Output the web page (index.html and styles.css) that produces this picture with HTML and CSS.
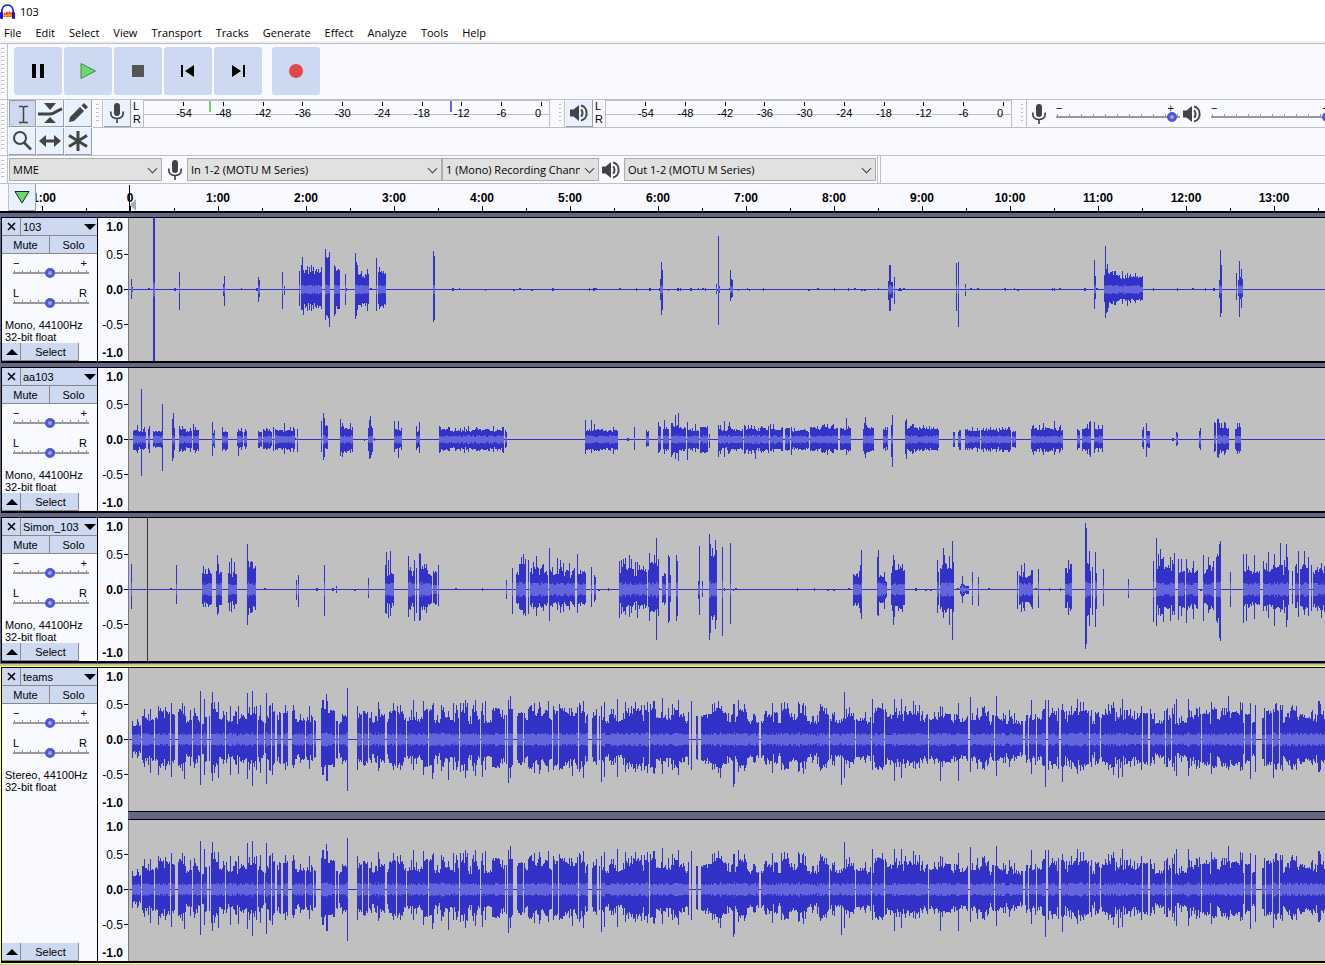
FILE: index.html
```
<!DOCTYPE html>
<html lang="en">
<head>
  <meta charset="UTF-8">
  <meta name="viewport" content="width=device-width, initial-scale=1.0">
  <title>103</title>
  <link rel="stylesheet" href="styles.css">
</head>
<body>
  <!-- Shared icons -->
  <svg class="sprite" width="0" height="0">
    <symbol id="mic" viewBox="0 0 16 20">
      <rect x="5" y="0" width="6" height="13" rx="3" fill="#444"/>
      <path d="M1.8 8.500v1.500c0 3.500 2.700 5.500 6.200 5.500s6.200-2 6.200-5.500V8.500M8 15.500V20" fill="none" stroke="#444" stroke-width="1.700"/>
    </symbol>
    <symbol id="speaker" viewBox="0 0 20 18">
      <path d="M1 5.500h3.500L10 1v16l-5.500-4.500H1z" fill="#444"/>
      <path d="M12 5.500c2 1.500 2 5.500 0 7M12 1.500c7.500 1.300 7.500 13.700 0 15" fill="none" stroke="#444" stroke-width="2"/>
    </symbol>
  </svg>

  <header class="titlebar">
    <svg width="16" height="16" viewBox="0 0 16 16">
      <path d="M2 9C1 4 4 1 7.500 1S14 4 13 9" fill="none" stroke="#1818d8" stroke-width="1.600"/>
      <path d="M3 13l1-5 1.500 1.500L7 7l1 2 1.500-2L11 9l1-1v5z" fill="#f33"/>
      <path d="M3 11l2-1 2 1 2-1.500 3 1.500v1.500H3z" fill="#fa0"/>
      <rect x="0" y="8" width="3" height="7" rx="1" fill="#1818d8"/>
      <rect x="12" y="8" width="3" height="7" rx="1" fill="#1818d8"/>
    </svg>
    <span>103</span>
  </header>

  <nav class="menubar">
    <a href="#">File</a>
    <a href="#">Edit</a>
    <a href="#">Select</a>
    <a href="#">View</a>
    <a href="#">Transport</a>
    <a href="#">Tracks</a>
    <a href="#">Generate</a>
    <a href="#">Effect</a>
    <a href="#">Analyze</a>
    <a href="#">Tools</a>
    <a href="#">Help</a>
  </nav>

  <div class="toolbar transport">
    <div class="grip"></div>
    <div class="transport-buttons">
      <button aria-label="Pause"><svg width="16" height="16"><path d="M2 1h4v14H2zM10 1h4v14h-4z"/></svg></button>
      <button aria-label="Play"><svg width="18" height="18"><path d="M2 1.500L16.500 9 2 16.500z" fill="#6fd66f" stroke="#3f8f46"/></svg></button>
      <button aria-label="Stop"><svg width="16" height="16"><path d="M2 2h12v12H2z" fill="#555"/></svg></button>
      <button aria-label="Skip to start"><svg width="16" height="16"><path d="M1 2h2v12H1zM14 2v12L5 8z"/></svg></button>
      <button aria-label="Skip to end"><svg width="16" height="16"><path d="M13 2h2v12h-2zM2 2v12l9-6z"/></svg></button>
      <button class="record" aria-label="Record"><svg width="16" height="16"><circle cx="8" cy="8" r="7" fill="#e34848"/></svg></button>
    </div>
  </div>

  <div class="toolbar tool-row">
    <div class="grip"></div>
    <div class="tools">
      <button class="active" aria-label="Selection tool"><svg width="22" height="22"><path d="M7 3.500h3.500l1 1 1-1H16M7 19.500h3.500l1-1 1 1H16M11.500 4v15" fill="none" stroke="#444" stroke-width="1.500"/></svg></button>
      <button aria-label="Envelope tool"><svg width="26" height="24"><path d="M7 2h12l-6 7zM7 22h12l-6-6z" fill="#444"/><path d="M1 13h12c5 0 7-4 12-5" fill="none" stroke="#444" stroke-width="3"/></svg></button>
      <button aria-label="Draw tool"><svg width="22" height="22"><path d="M2 20l1-5L13 5l4 4L7 19zM14.500 3.500L17 1l4 4-2.500 2.500z" fill="#444"/></svg></button>
      <button aria-label="Zoom tool"><svg width="22" height="22"><circle cx="9" cy="8" r="6" fill="none" stroke="#444" stroke-width="2"/><path d="M13 12.500l7 7" stroke="#444" stroke-width="2.500"/></svg></button>
      <button aria-label="Time shift tool"><svg width="22" height="22"><path d="M0 11l7-6v4.500h8V5l7 6-7 6v-4.500H7V17z" fill="#444"/></svg></button>
      <button aria-label="Multi tool"><svg width="22" height="22"><path d="M11 1v20M2 5.500l18 11M20 5.500L2 16.500" stroke="#444" stroke-width="3"/></svg></button>
    </div>
    <div class="meters">
      <div class="grip boxed"></div>
      <button class="meter-button" aria-label="Record meter"><svg width="16" height="20"><use href="#mic"/></svg></button>
      <div class="channels"><span>L</span><span>R</span></div>
      <div class="meter">
        <div class="scale"></div>
        <i class="peak green"></i>
        <i class="peak blue"></i>
      </div>
      <div class="grip boxed second"></div>
      <button class="meter-button" aria-label="Playback meter"><svg width="20" height="18"><use href="#speaker"/></svg></button>
      <div class="channels"><span>L</span><span>R</span></div>
      <div class="meter">
        <div class="scale"></div>
      </div>
      <div class="grip boxed second"></div>
      <div class="mixer">
        <svg width="16" height="20"><use href="#mic"/></svg>
        <div class="volume">
          <div class="ends"><span>−</span><span>+</span></div>
          <input type="range" aria-label="Recording volume" value="97">
        </div>
        <svg width="20" height="18"><use href="#speaker"/></svg>
        <div class="volume">
          <div class="ends"><span>−</span><span>+</span></div>
          <input type="range" aria-label="Playback volume" value="97">
        </div>
      </div>
    </div>
  </div>

  <div class="toolbar devices">
    <div class="grip"></div>
    <div class="device-list">
      <div class="select host"><select aria-label="Audio host"><option>MME</option></select></div>
      <svg width="16" height="20"><use href="#mic"/></svg>
      <div class="select input"><select aria-label="Recording device"><option>In 1-2 (MOTU M Series)</option></select></div>
      <div class="select chans"><select aria-label="Recording channels"><option>1 (Mono) Recording Channel</option></select></div>
      <svg width="20" height="18"><use href="#speaker"/></svg>
      <div class="select output"><select aria-label="Playback device"><option>Out 1-2 (MOTU M Series)</option></select></div>
    </div>
  </div>

  <div class="timeline">
    <div class="timeline-edge"></div>
    <button class="pin" aria-label="Pinned play head"><svg width="18" height="16"><path d="M2 2.500h14L9 14z" fill="#6fd66f" stroke="#222"/></svg></button>
    <div class="ruler"></div>
  </div>

  <main class="tracks"></main>

  <script src="tracks.js"></script>
</body>
</html>
```

FILE: styles.css
```
* {
  margin: 0;
  padding: 0;
  box-sizing: border-box;
}

body {
  font-family: "Open Sans", "Noto Sans", sans-serif;
  font-size: 12px;
  color: #000;
  background: #646687;
  min-height: 100vh;
  overflow: hidden;
}

button {
  border: none;
  background: #cdd9f0;
  font: inherit;
  color: inherit;
}

svg {
  display: block;
  flex: none;
}

.sprite {
  position: absolute;
}

/* Title and menu */
.titlebar {
  display: flex;
  align-items: center;
  gap: 4px;
  height: 23px;
  background: #fff;
  font-size: 11px;
}

.menubar {
  display: flex;
  gap: 14px;
  height: 20px;
  padding-left: 4px;
  background: #fff;
  border-bottom: 2px solid #f0f0f0;
  font-size: 11px;
  line-height: 20px;
}

.menubar a {
  color: #000;
  text-decoration: none;
}

/* Toolbars */
.toolbar {
  display: flex;
  background: #f8faff;
  border-top: 1px solid #c0c0c0;
}

.grip {
  flex: none;
  width: 8px;
  padding: 4px 3px 4px 1px;
  border-right: 1px solid #c0c0c0;
  background: repeating-linear-gradient(#c0c0c0 0 1px, transparent 1px 4px) content-box;
}

.transport {
  height: 56px;
}

.transport-buttons {
  display: flex;
  gap: 2px;
  padding: 3px 6px;
}

.transport-buttons button {
  display: grid;
  place-items: center;
  width: 48px;
  height: 48px;
  border-radius: 3px;
}

.transport-buttons .record {
  margin-left: 8px;
}

.tool-row {
  height: 56px;
}

.tools {
  flex: none;
  display: grid;
  grid-template-columns: repeat(3, 28px);
  grid-auto-rows: 28px;
  padding-left: 1px;
}

.tools button,
.meter-button,
.pin {
  display: grid;
  place-items: center;
  width: 27px;
  height: 27px;
  background: #eaf1ff;
  border-right: 1px solid #9a9fb0;
  border-bottom: 1px solid #9a9fb0;
}

.tools .active {
  background: #cdd9f0;
  border: 1px solid #9a9fb0;
}

.meters {
  flex: 1;
  display: flex;
  height: 28px;
  min-width: 0;
  border-bottom: 1px solid #c0c0c0;
  overflow: hidden;
}

.grip.boxed {
  width: 10px;
  padding: 4px 3px;
}

.grip.second {
  width: 16px;
  padding-left: 9px;
  border-left: 1px solid #c0c0c0;
}

.meter-button {
  flex: none;
  margin-left: 1px;
}

.channels {
  flex: none;
  display: flex;
  flex-direction: column;
  width: 12px;
  padding-left: 2px;
  font: 11px/13px "Liberation Sans", sans-serif;
}

.meter {
  position: relative;
  flex: none;
  width: 406px;
  padding-left: 20px;
  border-left: 1px solid #c0c0c0;
  border-top: 1px solid #c0c0c0;
  background: linear-gradient(#c0c0c0, #c0c0c0) 0 13px / 100% 1px no-repeat;
  overflow: hidden;
}

.scale {
  display: grid;
  grid-template-columns: repeat(10, 1fr);
  width: 397px;
}

.scale span {
  padding-top: 6px;
  background: linear-gradient(#000, #000) center 1px / 1px 4px no-repeat;
  font: 11px/13px "Liberation Sans", sans-serif;
  text-align: center;
}

.scale span:last-child {
  padding-right: 6px;
}

.peak {
  position: absolute;
  top: 0;
  width: 2px;
  height: 11px;
}

.peak.green {
  left: 65px;
  background: #6fd66f;
}

.peak.blue {
  left: 306px;
  background: #6464f0;
}

.mixer {
  display: flex;
  align-items: center;
  gap: 9px;
  padding-left: 4px;
}

.mixer .volume {
  width: 124px;
}

.mixer .volume + svg {
  margin-left: -7px;
}

.ends {
  display: flex;
  justify-content: space-between;
  height: 10px;
  font: 11px/10px "Liberation Sans", sans-serif;
}

.mixer .ends {
  height: 7px;
  padding-right: 6px;
  line-height: 7px;
}

input[type="range"] {
  display: block;
  appearance: none;
  width: 100%;
  height: 10px;
  background:
    linear-gradient(#999, #999) 0 4px / 100% 2px no-repeat,
    repeating-linear-gradient(90deg, #999 0 1px, transparent 1px 12px) 1px 2px / 100% 2px no-repeat;
}

input[type="range"]::-webkit-slider-thumb {
  appearance: none;
  width: 10px;
  height: 10px;
  border: 3px solid #4b55e8;
  border-radius: 50%;
  background: #aaa;
}

.devices {
  height: 28px;
}

.device-list {
  display: flex;
  align-items: center;
  padding: 0 1px;
  border-right: 1px solid #c0c0c0;
  box-shadow: 2px 0 #f8faff, 3px 0 #c0c0c0;
}

.device-list svg {
  margin: 0 4px 0 5px;
}

.select {
  position: relative;
}

.select select {
  appearance: none;
  display: block;
  width: 100%;
  height: 23px;
  padding: 0 18px 0 3px;
  border: 1px solid #adadad;
  border-radius: 0;
  background: #e1e1e1;
  color: #000;
  font: 11px "Open Sans", "Noto Sans", sans-serif;
  text-overflow: clip;
}

.select::after {
  content: "";
  position: absolute;
  right: 6px;
  top: 7px;
  width: 6px;
  height: 6px;
  border-right: 1px solid #444;
  border-bottom: 1px solid #444;
  transform: rotate(45deg);
  pointer-events: none;
}

.host { width: 153px; }
.input { width: 255px; }
.chans { width: 157px; }
.output { width: 252px; }

.device-list .chans + svg {
  margin: 0 3px 0 2px;
}

/* Time ruler */
.timeline {
  display: flex;
  height: 30px;
  background: #f8faff;
  border-top: 1px solid #c0c0c0;
  border-bottom: 2px solid #000;
}

.timeline-edge {
  flex: none;
  width: 9px;
  border-right: 1px solid #c0c0c0;
}

.pin {
  flex: none;
}

.ruler {
  position: relative;
  flex: 1;
  display: flex;
  min-width: 0;
  overflow: hidden;
}

.ruler span {
  flex: none;
  width: 88px;
  background:
    linear-gradient(#000, #000) 44px bottom / 1px 5px no-repeat,
    linear-gradient(#000, #000) 0 bottom / 1px 3px no-repeat;
  font: bold 12px/28px "Liberation Sans", sans-serif;
  text-align: center;
}

.ruler span:first-child {
  margin-left: -38px;
}

.playhead {
  position: absolute;
  left: 93px;
  top: 1px;
  height: 26px;
  border-left: 1px solid #000;
}

.playhead::after {
  content: "";
  position: absolute;
  bottom: 0;
  border: 6px solid transparent;
  border-left: none;
  border-right-color: #aaa;
}

/* Tracks */
.tracks {
  padding: 4px 0 2px 1px;
}

.track {
  display: flex;
  margin-bottom: 4px;
  border: 1px solid #000;
  border-right: none;
  border-bottom-width: 2px;
  background: #f8faff;
}

.track.selected {
  box-shadow: 0 0 0 1px #ffff78, 0 0 0 3px #c8c88c;
}

.panel {
  flex: none;
  display: flex;
  flex-direction: column;
  width: 96px;
  border-right: 1px solid #000;
  font: 11px/12px "Liberation Sans", sans-serif;
}

.panel-row {
  display: flex;
  height: 18px;
}

.panel button {
  height: 18px;
  border-right: 1px solid #888;
  border-bottom: 1px solid #888;
}

.panel .close,
.panel .collapse {
  display: grid;
  place-items: center;
  width: 19px;
  padding-left: 1px;
}

.panel .name {
  flex: 1;
  display: flex;
  align-items: center;
  justify-content: space-between;
  padding: 0 1px 0 2px;
  border-right: none;
}

.panel .mute {
  width: 48px;
}

.panel .solo {
  flex: 1;
  border-right: none;
}

.panel .select-track {
  width: 58px;
  padding-left: 2px;
}

.sliders {
  display: grid;
  gap: 10px;
  padding: 4px 8px 0 11px;
}

.sliders .ends {
  padding-right: 2px;
}

.sliders input {
  background:
    linear-gradient(#999, #999) 0 4px / 100% 2px no-repeat,
    repeating-linear-gradient(90deg, #999 0 1px, transparent 1px 8px) 1px 2px / 100% 2px no-repeat;
}

.info {
  flex: 1;
  padding: 11px 0 0 3px;
  white-space: nowrap;
}

.channel-list {
  flex: 1;
  min-width: 0;
}

.channel {
  display: flex;
  height: 143px;
}

.channel + .channel {
  position: relative;
  margin-top: 7px;
}

/* Divider between the two channels of a stereo track */
.channel + .channel::before {
  content: "";
  position: absolute;
  top: -7px;
  left: 30px;
  right: 0;
  height: 7px;
  border: 1px solid #000;
  border-width: 1px 0;
  background: #646687;
}

.levels {
  flex: none;
  display: grid;
  grid-template-rows: 17px 39px 31px 39px 17px;
  align-items: center;
  width: 30px;
  font: 12px/14px "Liberation Sans", sans-serif;
  text-align: right;
}

.levels span {
  padding-right: 5px;
  background: linear-gradient(#000, #000) right center / 4px 1px no-repeat;
}

.levels span:nth-child(odd) {
  font-weight: bold;
}

.levels span:first-child,
.levels span:last-child {
  background: none;
}

.wave {
  flex: 1;
  min-width: 0;
  height: 143px;
  border-left: 1px solid #777;
  background: #c0c0c0;
  shape-rendering: crispEdges;
}

.wave .outer {
  stroke: #3232c8;
}

.wave .inner {
  stroke: #6464dc;
}

.wave .split {
  stroke: #333;
}
```

FILE: tracks.js
```
// bursts: [from, to, up, down], peaks: [x, up, down], all in pixels round the centre line
const tracks = [
  {
    name: '103', format: 'Mono', rms: 4, specks: 90,
    bursts: [[171,191,20,19],[195,199,38,33],[204,209,22,22],[225,238,18,19],[248,255,20,20],[600,602,10,9],
      [758,762,11,14],[974,1012,16,14],[1108,1112,10,8]],
    peaks: [[1,10,9],[2,2,2],[23,72,72],[24,72,72],[49,17,20],[93,5,6],[94,13,16],[128,12,12],[129,9,7],[152,17,19],
      [154,3,5],[169,18,16],[171,24,20],[172,32,20],[173,19,25],[183,22,19],[195,40,30],[199,37,37],[204,24,26],
      [205,22,24],[215,15,15],[225,36,29],[226,27,26],[227,24,20],[246,31,21],[249,22,19],[303,38,32],[304,33,30],
      [530,10,10],[531,27,25],[532,19,20],[586,5,4],[588,53,35],[589,3,3],[600,19,11],[759,24,21],[760,24,21],
      [764,12,14],[826,26,21],[828,27,37],[835,5,6],[964,29,19],[965,13,9],[975,43,28],[976,20,23],[977,25,22],
      [978,16,18],[992,18,14],[997,16,16],[1089,9,8],[1090,39,27],[1091,24,23],[1106,16,10],[1109,28,27],[1111,20,18]]
  },
  {
    name: 'aa103', format: 'Mono', rms: 4, specks: 20,
    bursts: [[3,15,10,12],[18,19,9,9],[23,31,9,9],[42,44,13,11],[49,61,11,12],[63,68,11,13],[82,84,9,9],[92,97,9,12],
      [107,109,9,9],[110,112,9,9],[114,116,8,8],[128,131,9,10],[133,141,11,11],[145,164,11,12],[193,197,15,11],[210,222,14,16],[238,242,12,14],
      [264,271,11,11],[286,289,9,9],[309,373,11,12],[375,376,9,10],[455,487,11,13],[516,518,11,9],[528,530,14,13],
      [533,538,11,11],[541,555,15,15],[557,568,11,12],[570,577,13,14],[588,612,12,13],[614,638,12,13],[640,652,13,13],
      [655,659,12,12],[661,678,10,11],[680,707,13,13],[710,720,12,12],[733,743,12,13],[753,757,11,11],[775,808,13,13],
      [823,824,10,11],[828,830,8,10],[835,849,11,12],[851,880,10,11],[882,885,10,10],[901,932,12,13],[947,949,12,12],
      [952,960,12,13],[964,972,12,11],[1012,1013,11,9],[1017,1019,9,9],[1046,1047,6,6],[1069,1070,10,10],
      [1084,1085,18,14],[1087,1098,16,15],[1105,1110,13,13]],
    peaks: [[7,14,13],[11,50,36],[14,12,9],[19,13,13],[32,35,31],[42,20,21],[43,26,18],[49,13,12],[63,15,10],
      [82,17,16],[92,12,11],[108,10,16],[143,12,11],[154,16,14],[160,12,12],[167,10,12],[191,18,12],[193,26,20],
      [194,21,17],[210,20,16],[220,16,13],[239,19,19],[240,23,18],[264,18,12],[268,18,18],[286,13,10],[289,17,13],
      [309,13,13],[363,13,12],[455,19,14],[461,19,13],[464,15,11],[504,12,10],[528,17,13],[534,19,14],[541,16,17],
      [545,24,19],[548,26,21],[557,17,20],[565,15,12],[579,5,8],[588,14,17],[594,18,17],[599,17,13],[625,10,19],
      [640,15,11],[643,15,12],[661,12,15],[703,15,13],[716,21,15],[734,16,14],[735,22,18],[761,14,17],[762,24,27],
      [775,18,14],[776,20,19],[793,14,11],[842,12,10],[873,10,12],[902,13,12],[909,14,12],[913,16,15],[924,18,15],
      [930,14,11],[959,17,15],[960,18,17],[964,17,13],[968,14,12],[1016,16,17],[1087,20,17],[1088,20,18],
      [1094,17,15],[1109,16,13]]
  },
  {
    name: 'Simon_103', format: 'Mono', rms: 7, specks: 60, split: 17, rough: true,
    bursts: [[72,81,18,17],[86,91,19,19],[98,106,19,18],[117,125,22,20],[255,263,21,22],[278,284,19,19],[289,301,20,19],
      [303,306,21,18],[386,395,24,22],[400,417,20,18],[419,444,20,18],[447,455,18,16],[464,465,15,13],[489,516,23,20],
      [518,528,24,22],[532,535,22,22],[579,586,38,32],[723,731,16,18],[749,756,13,14],[761,774,20,19],[810,823,25,23],
      [830,838,5,7],[889,902,15,16],[935,941,23,20],[955,960,28,30],[1026,1044,24,21],[1048,1054,20,20],
      [1056,1067,20,20],[1073,1083,24,20],[1086,1089,42,40],[1113,1129,24,21],[1133,1142,24,20],[1143,1158,23,20],
      [1165,1168,28,24],[1170,1177,22,19],[1183,1196,20,20]],
    peaks: [[1,25,19],[46,24,14],[73,23,17],[87,34,25],[88,25,23],[99,27,21],[101,31,22],[104,27,19],[117,45,35],
      [118,28,25],[121,28,23],[166,9,10],[168,14,17],[194,24,26],[206,3,3],[238,11,8],[256,37,24],[258,29,28],
      [260,38,26],[278,33,27],[284,29,31],[286,21,23],[289,36,31],[290,35,30],[308,24,16],[376,9,9],[382,21,24],
      [391,32,20],[393,35,25],[398,29,24],[403,27,19],[406,33,26],[412,24,17],[419,41,31],[427,31,20],[430,29,23],
      [433,26,22],[447,35,23],[461,22,17],[489,28,28],[499,34,27],[501,30,23],[505,27,20],[507,27,28],[519,36,31],
      [524,34,22],[526,51,50],[538,34,33],[539,32,31],[540,14,12],[546,34,31],[547,28,26],[568,8,9],[569,43,25],
      [572,8,7],[579,55,50],[580,45,43],[582,41,30],[586,39,30],[592,42,46],[600,46,34],[730,24,23],[731,39,29],
      [747,32,25],[748,39,26],[754,17,19],[763,34,35],[764,29,27],[807,29,23],[808,17,15],[813,41,28],[814,34,20],
      [819,33,35],[822,48,50],[832,13,13],[842,17,15],[848,12,16],[887,18,19],[891,24,22],[894,26,21],[908,20,18],
      [938,29,25],[955,66,59],[956,61,54],[959,38,36],[962,22,25],[965,37,37],[966,16,19],[973,20,16],[998,10,8],
      [1023,28,32],[1026,51,36],[1028,35,25],[1030,40,26],[1033,32,32],[1040,32,31],[1044,36,25],[1048,30,30],
      [1051,30,26],[1056,30,33],[1063,28,29],[1073,34,31],[1078,32,23],[1089,45,48],[1090,48,51],[1100,17,17],
      [1113,35,33],[1116,35,31],[1124,34,29],[1138,37,28],[1144,35,36],[1150,46,22],[1156,45,37],[1157,32,30],
      [1162,18,14],[1168,38,27],[1174,38,25],[1178,32,26],[1181,24,21],[1191,26,28]]
  },
  {
    name: 'teams', format: 'Stereo', rms: 6, specks: 0, selected: true, rough: true,
    bursts: [[2,10,20,20],[12,23,26,26],[25,1197,28,27]],
    gaps: [24,40,45,46,47,62,70,71,77,78,80,95,127,134,141,145,146,151,152,158,159,160,161,175,183,186,187,188,189,190,
      205,208,218,219,220,221,222,223,224,225,226,232,238,255,256,266,276,298,329,350,375,377,383,384,385,386,393,422,
      428,448,458,459,460,461,467,468,470,519,559,560,562,563,564,565,568,569,570,582,629,630,699,725,741,754,798,838,
      839,864,893,894,898,906,916,917,929,930,959,970,1012,1018,1019,1035,1041,1071,1114,1121,1126,1127,1128,1129,1130,
      1131,1135,1142,1149],
    peaks: [[20,30,33],[28,33,35],[41,36,37],[54,33,39],[70,48,45],[74,40,35],[82,47,41],[88,37,38],[100,33,35],
      [108,33,34],[117,46,39],[122,48,46],[130,34,33],[136,46,44],[142,36,35],[192,39,35],[193,39,35],[196,45,41],
      [197,38,41],[217,51,51],[227,33,30],[248,37,31],[283,39,30],[293,38,35],[302,34,39],[318,28,40],[323,36,30],
      [335,39,38],[345,39,36],[352,36,37],[355,38,30],[378,39,43],[380,43,38],[409,37,34],[418,38,32],[442,27,36],
      [453,38,38],[471,33,42],[474,37,37],[487,40,37],[495,37,32],[532,41,34],[548,39,35],[561,38,30],[582,35,30],
      [590,30,38],[603,35,47],[604,35,44],[654,37,30],[668,37,32],[673,36,34],[711,20,45],[714,47,38],[742,40,30],
      [764,40,41],[771,40,38],[783,38,28],[810,33,41],[828,36,41],[840,42,32],[866,43,36],[915,39,47],[918,39,30],
      [932,35,42],[947,40,34],[988,20,38],[992,40,37],[1046,40,36],[1058,40,36],[1098,43,30],[1120,36,39],
      [1143,30,38],[1190,35,30]]
  }
];

const CENTRE = 71;
const MINUTE = 88;

// Small repeatable generator, so both stereo channels come out the same
function makeRandom(seed) {
  return () => {
    seed = (seed * 16807) % 2147483647;
    return seed / 2147483647;
  };
}

function waveSvg(track) {
  const random = makeRandom(track.name.length * 7919 + 11);
  const columns = new Map();

  for (let i = 0; i < track.specks; i++) {
    const x = Math.floor(random() * 1100);
    const speck = [random() > 0.4 ? 1 : 0, random() > 0.4 ? 1 : 0];
    columns.set(x, speck);
    if (random() > 0.5) columns.set(x + 1, speck);
  }
  for (const [from, to, up, down] of track.bursts) {
    // The level drifts over a few columns, with single columns standing out
    let drift = 0.8;
    for (let x = from; x <= to; x++) {
      if (random() < 0.35) drift = track.rough ? 0.5 + random() * 0.5 : 0.6 + random() * 0.25;
      let level = drift + random() * 0.15;
      if (random() < 0.2) level += 0.25;
      columns.set(x, [Math.round(up * level), Math.round(down * (level * 0.85 + random() * 0.15))]);
    }
  }
  for (const x of track.gaps || []) columns.delete(x);
  for (const [x, up, down] of track.peaks) columns.set(x, [up, down]);

  let outer = `M0 ${CENTRE + 0.5}H3000`;
  let inner = '';
  for (const [x, [up, down]] of columns) {
    outer += `M${x + 1.5} ${CENTRE - up}V${CENTRE + down + 1}`;
    const size = Math.min(up, down);
    const rms = Math.min(Math.round(track.rms * (0.4 + random() * 0.4) + size * 0.06), Math.floor(size * 0.5));
    if (rms > 0) inner += `M${x + 1.5} ${CENTRE - rms}V${CENTRE + rms + 1}`;
  }
  const split = track.split ? `<path class="split" d="M${track.split + 1.5} 0V143"/>` : '';
  return `<svg class="wave"><path class="outer" d="${outer}"/><path class="inner" d="${inner}"/>${split}</svg>`;
}

function trackHtml(track) {
  const channel = `
    <div class="channel">
      <div class="levels"><span>1.0</span><span>0.5</span><span>0.0</span><span>-0.5</span><span>-1.0</span></div>
      ${waveSvg(track)}
    </div>`;
  return `
    <section class="track${track.selected ? ' selected' : ''}">
      <div class="panel">
        <div class="panel-row">
          <button class="close" aria-label="Close ${track.name}"><svg width="9" height="9"><path d="M1 1l7 7M8 1L1 8" stroke="#000" stroke-width="1.500"/></svg></button>
          <button class="name">${track.name}<svg width="12" height="6"><path d="M0 0h12L6 6z"/></svg></button>
        </div>
        <div class="panel-row">
          <button class="mute">Mute</button>
          <button class="solo">Solo</button>
        </div>
        <div class="sliders">
          <div>
            <div class="ends"><span>−</span><span>+</span></div>
            <input type="range" aria-label="Gain ${track.name}" value="48">
          </div>
          <div>
            <div class="ends"><span>L</span><span>R</span></div>
            <input type="range" aria-label="Pan ${track.name}" value="48">
          </div>
        </div>
        <div class="info">${track.format}, 44100Hz<br>32-bit float</div>
        <div class="panel-row">
          <button class="collapse" aria-label="Collapse ${track.name}"><svg width="12" height="6"><path d="M0 6h12L6 0z"/></svg></button>
          <button class="select-track">Select</button>
        </div>
      </div>
      <div class="channel-list">${track.format === 'Stereo' ? channel + channel : channel}</div>
    </section>`;
}

document.querySelector('.tracks').innerHTML = tracks.map(trackHtml).join('');

// Decibel scales
document.querySelectorAll('.scale').forEach(scale => {
  for (let db = -54; db <= 0; db += 6) scale.innerHTML += `<span>${db}</span>`;
});

// One label a minute, as many as fit, then a blank cell for the last half-minute tick
const ruler = document.querySelector('.ruler');
const lastMinute = Math.floor((ruler.clientWidth - 110) / MINUTE);
for (let minute = -1; minute <= lastMinute; minute++) {
  ruler.innerHTML += `<span>${minute === 0 ? '0' : minute + ':00'}</span>`;
}
ruler.innerHTML += '<span></span><i class="playhead"></i>';
```
